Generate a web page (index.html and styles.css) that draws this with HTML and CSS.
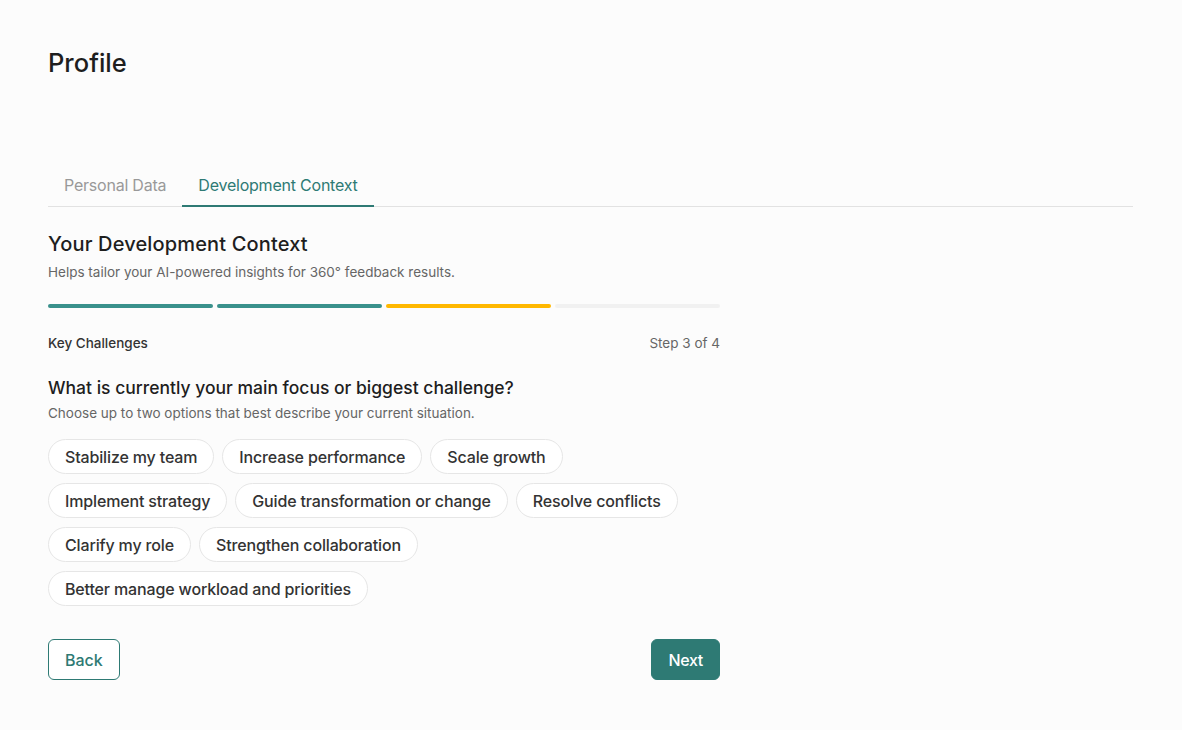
FILE: index.html
```html
<!DOCTYPE html>
<html lang="en">
<head>
    <meta charset="UTF-8">
    <meta name="viewport" content="width=device-width, initial-scale=1.0">
    <title>Profile</title>
    <link rel="stylesheet" href="styles.css">
</head>
<body>
    <div class="page">
        <h1 class="page-title">Profile</h1>

        <div class="tabs">
            <button class="tab">Personal Data</button>
            <button class="tab active">Development Context</button>
        </div>

        <div class="form">
            <h2>Your Development Context</h2>
            <p class="subtitle">Helps tailor your AI-powered insights for 360° feedback results.</p>

            <div class="progress">
                <span class="seg done"></span>
                <span class="seg done"></span>
                <span class="seg current"></span>
                <span class="seg"></span>
            </div>

            <div class="step-row">
                <span class="step-name">Key Challenges</span>
                <span class="step-count">Step 3 of 4</span>
            </div>

            <h3>What is currently your main focus or biggest challenge?</h3>
            <p class="hint">Choose up to two options that best describe your current situation.</p>

            <div class="chips">
                <button class="chip">Stabilize my team</button>
                <button class="chip">Increase performance</button>
                <button class="chip">Scale growth</button>
                <button class="chip">Implement strategy</button>
                <button class="chip">Guide transformation or change</button>
                <button class="chip">Resolve conflicts</button>
                <button class="chip">Clarify my role</button>
                <button class="chip">Strengthen collaboration</button>
                <button class="chip">Better manage workload and priorities</button>
            </div>

            <div class="actions">
                <button class="btn btn-outline">Back</button>
                <button class="btn btn-primary">Next</button>
            </div>
        </div>
    </div>
</body>
</html>
```

FILE: styles.css
```css
body {
    margin: 0;
    background: #fcfcfc;
    font-family: 'Inter', 'Roboto', sans-serif;
    color: #222;
}

button {
    font-family: inherit;
}

.page {
    padding: 48px 49px 40px 48px;
}

.page-title {
    margin: 0;
    font-size: 25.5px;
    font-weight: 500;
    line-height: 30px;
    color: #1e1e1e;
}

.tabs {
    display: flex;
    margin-top: 92px;
    border-bottom: 1px solid #e2e2e2;
}

.tab {
    background: none;
    border: none;
    border-bottom: 2px solid transparent;
    margin-bottom: -1px;
    padding: 5px 16px 10px;
    font-size: 16px;
    letter-spacing: -0.22px;
    color: #999;
    cursor: pointer;
}

.tab.active {
    color: #2e7a74;
    border-bottom-color: #2e7a74;
}

.form {
    width: 672px;
}

h2 {
    margin: 24px 0 0;
    font-size: 20px;
    font-weight: 500;
    line-height: 26px;
    letter-spacing: 0.15px;
    color: #1e1e1e;
}

.subtitle {
    margin: 6px 0 0;
    font-size: 13.5px;
    line-height: 18px;
    color: #666;
}

.progress {
    display: flex;
    gap: 4px;
    margin-top: 23px;
}

.seg {
    flex: 1;
    height: 4px;
    border-radius: 2px;
    background: #f1f1f1;
}

.seg.done {
    background: #3a918c;
}

.seg.current {
    background: #ffb800;
}

.step-row {
    display: flex;
    justify-content: space-between;
    margin-top: 26px;
    font-size: 13.5px;
    line-height: 18px;
}

.step-name {
    font-weight: 500;
    color: #333;
}

.step-count {
    color: #666;
}

h3 {
    margin: 25px 0 0;
    font-size: 17.5px;
    font-weight: 500;
    line-height: 22px;
    color: #1e1e1e;
}

.hint {
    margin: 5px 0 0;
    font-size: 13.5px;
    line-height: 18px;
    color: #666;
}

.chips {
    display: flex;
    flex-wrap: wrap;
    gap: 9px 8px;
    margin-top: 17px;
}

.chip {
    background: #fff;
    border: 1px solid #e6e6e6;
    border-radius: 18px;
    padding: 0 16px;
    height: 35px;
    font-size: 16px;
    font-weight: 500;
    letter-spacing: -0.15px;
    color: #333;
    cursor: pointer;
}

.chip:hover {
    border-color: #2e7a74;
}

.actions {
    display: flex;
    justify-content: space-between;
    align-items: center;
    margin-top: 33px;
}

.btn {
    height: 41px;
    border-radius: 6px;
    padding: 0 16px;
    font-size: 16px;
    font-weight: 500;
    cursor: pointer;
}

.btn-outline {
    background: #fff;
    border: 1px solid #2e7a74;
    color: #2e7a74;
}

.btn-primary {
    background: #2e7a74;
    border: 1px solid #2e7a74;
    color: #fff;
    letter-spacing: -0.3px;
}
```
